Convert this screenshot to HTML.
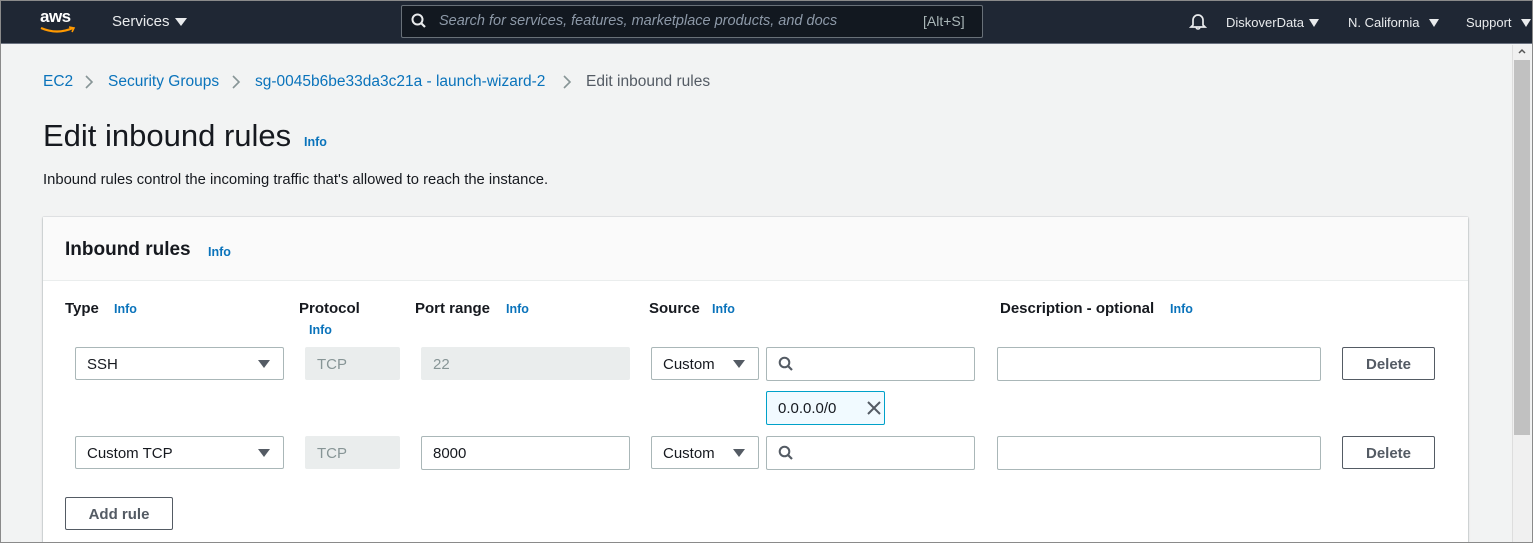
<!DOCTYPE html>
<html><head><meta charset="utf-8"><style>
*{box-sizing:border-box;margin:0;padding:0}
html{width:1533px;height:543px;overflow:hidden}
body{width:1533px;height:543px;overflow:hidden;font-family:"Liberation Sans",sans-serif;background:#f2f3f3;position:relative;color:#16191f}
.a{position:absolute;white-space:nowrap}
#frame{position:absolute;left:0;top:0;width:1533px;height:543px;border:1px solid #8a8a8a;pointer-events:none;z-index:10}
.nav{position:absolute;left:0;top:0;width:1533px;height:44px;background:#1f2734;border-bottom:1px solid #6b7280}
.nt{color:#e9ebed;font-size:14px}
.link{color:#0a73bb;font-size:15.5px}
.info{color:#0a73bb;font-size:12.5px;font-weight:bold}
.lbl{font-size:15px;font-weight:bold;color:#16191f}
.box{position:absolute;border:1px solid #aab7b8;border-radius:2px;background:#fff;font-size:15px;padding-left:11px;display:flex;align-items:center;padding-top:1px}
.dis{background:#eaeded;border-color:#eaeded;color:#879596}
.tri{position:absolute;width:0;height:0;border-left:6px solid transparent;border-right:6px solid transparent;border-top:8px solid #545b64}
.btn{position:absolute;border:1px solid #545b64;border-radius:2px;background:#fff;font-weight:bold;font-size:15px;color:#545b64;display:flex;align-items:center;justify-content:center;padding-top:1px}
.chev{position:absolute}
</style></head><body>
<div class="nav"></div>
<div class="a" style="left:40px;top:7px;color:#fff;font-size:17px;font-weight:bold;letter-spacing:-0.5px">aws</div>
<svg class="a" style="left:39px;top:25px" width="38" height="10"><path d="M2 3 Q18 10 34 3" stroke="#f90" stroke-width="2.2" fill="none"/><path d="M30 2 L35 3 L33 7" stroke="#f90" stroke-width="1.6" fill="none"/></svg>
<div class="a nt" style="left:112px;top:13px;font-size:15px">Services</div>
<div class="tri" style="left:175px;top:18px;border-top-color:#e9ebed"></div>
<div class="a" style="left:401px;top:5px;width:582px;height:33px;border:1px solid #687078;border-radius:2px;background:#121820"></div>
<svg class="a" style="left:411px;top:13px" width="16" height="16"><circle cx="6.5" cy="6.5" r="5" stroke="#e9ebed" stroke-width="2" fill="none"/><path d="M10 10 L14 14" stroke="#e9ebed" stroke-width="2.2"/></svg>
<div class="a" style="left:439px;top:13px;color:#8d99a8;font-size:14.5px;font-style:italic">Search for services, features, marketplace products, and docs</div>
<div class="a" style="left:923px;top:13px;color:#aab7b8;font-size:14px">[Alt+S]</div>
<svg class="a" style="left:1189px;top:12px" width="18" height="18"><path d="M4 13 L4 8 A5 5 0 0 1 14 8 L14 13 L16 15 L2 15 Z" stroke="#e9ebed" stroke-width="1.7" fill="none"/><path d="M7 15 A2 2 0 0 0 11 15" stroke="#e9ebed" stroke-width="1.5" fill="none"/></svg>
<div class="a nt" style="left:1226px;top:15px;font-size:13px">DiskoverData</div>
<div class="tri" style="left:1309px;top:19px;border-top-color:#e9ebed;border-left-width:5px;border-right-width:5px"></div>
<div class="a nt" style="left:1348px;top:15px;font-size:13px">N. California</div>
<div class="tri" style="left:1429px;top:19px;border-top-color:#e9ebed;border-left-width:5px;border-right-width:5px"></div>
<div class="a nt" style="left:1466px;top:15px;font-size:13px">Support</div>
<div class="tri" style="left:1521px;top:19px;border-top-color:#e9ebed;border-left-width:5px;border-right-width:5px"></div>

<div class="a" style="left:1512px;top:45px;width:19px;height:498px;background:#f0f0f0;border-left:1px solid #ddd"></div>
<div class="a" style="left:1514px;top:60px;width:16px;height:375px;background:#c1c1c1"></div>
<svg class="a" style="left:1517px;top:47px" width="10" height="8"><path d="M2 6 L5 3 L8 6" stroke="#555" stroke-width="1.5" fill="none"/></svg>

<div class="a link" style="left:43px;top:73px">EC2</div>
<svg class="chev" style="left:84px;top:74px" width="10" height="16"><path d="M2 2 L8 8 L2 14" stroke="#879596" stroke-width="1.6" fill="none"/></svg>
<div class="a link" style="left:108px;top:73px">Security Groups</div>
<svg class="chev" style="left:231px;top:74px" width="10" height="16"><path d="M2 2 L8 8 L2 14" stroke="#879596" stroke-width="1.6" fill="none"/></svg>
<div class="a link" style="left:255px;top:73px">sg-0045b6be33da3c21a - launch-wizard-2</div>
<svg class="chev" style="left:562px;top:74px" width="10" height="16"><path d="M2 2 L8 8 L2 14" stroke="#879596" stroke-width="1.6" fill="none"/></svg>
<div class="a" style="left:586px;top:73px;font-size:15.5px;color:#545b64">Edit inbound rules</div>

<div class="a" style="left:43px;top:118px;font-size:31px;color:#16191f">Edit inbound rules</div>
<div class="a info" style="left:304px;top:135px">Info</div>
<div class="a" style="left:43px;top:172px;font-size:14.8px;color:#16191f">Inbound rules control the incoming traffic that's allowed to reach the instance.</div>

<div class="a" style="left:43px;top:217px;width:1425px;height:330px;background:#fff;box-shadow:0 1px 2px rgba(0,28,36,.3),0 0 1px rgba(0,28,36,.3)"></div>
<div class="a" style="left:43px;top:217px;width:1425px;height:64px;background:#fafafa;border-bottom:1px solid #eaeded"></div>
<div class="a" style="left:65px;top:239px;font-size:19px;font-weight:bold">Inbound rules</div>
<div class="a info" style="left:208px;top:245px">Info</div>

<div class="a lbl" style="left:65px;top:300px">Type</div><div class="a info" style="left:114px;top:302px">Info</div>
<div class="a lbl" style="left:299px;top:300px">Protocol</div><div class="a info" style="left:309px;top:323px">Info</div>
<div class="a lbl" style="left:415px;top:300px">Port range</div><div class="a info" style="left:506px;top:302px">Info</div>
<div class="a lbl" style="left:649px;top:300px">Source</div><div class="a info" style="left:712px;top:302px">Info</div>
<div class="a lbl" style="left:1000px;top:300px">Description - optional</div><div class="a info" style="left:1170px;top:302px">Info</div>

<div class="box" style="left:75px;top:347px;width:209px;height:33px">SSH</div><div class="tri" style="left:258px;top:360px"></div>
<div class="box dis" style="left:305px;top:347px;width:95px;height:33px">TCP</div>
<div class="box dis" style="left:421px;top:347px;width:209px;height:33px">22</div>
<div class="box" style="left:651px;top:347px;width:108px;height:33px">Custom</div><div class="tri" style="left:733px;top:360px"></div>
<div class="box" style="left:766px;top:347px;width:209px;height:34px"></div>
<svg class="a" style="left:778px;top:356px" width="16" height="16"><circle cx="6.5" cy="6.5" r="4.8" stroke="#545b64" stroke-width="2" fill="none"/><path d="M10 10 L14 14" stroke="#545b64" stroke-width="2.2"/></svg>
<div class="box" style="left:997px;top:347px;width:324px;height:34px"></div>
<div class="btn" style="left:1342px;top:347px;width:93px;height:33px">Delete</div>

<div class="box" style="left:766px;top:391px;width:119px;height:34px;background:#f1faff;border-color:#00a1c9">0.0.0.0/0</div>
<svg class="a" style="left:866px;top:400px" width="16" height="16"><path d="M2 2 L14 14 M14 2 L2 14" stroke="#545b64" stroke-width="2"/></svg>

<div class="box" style="left:75px;top:436px;width:209px;height:33px">Custom TCP</div><div class="tri" style="left:258px;top:449px"></div>
<div class="box dis" style="left:305px;top:436px;width:95px;height:33px">TCP</div>
<div class="box" style="left:421px;top:436px;width:209px;height:34px">8000</div>
<div class="box" style="left:651px;top:436px;width:108px;height:33px">Custom</div><div class="tri" style="left:733px;top:449px"></div>
<div class="box" style="left:766px;top:436px;width:209px;height:34px"></div>
<svg class="a" style="left:778px;top:445px" width="16" height="16"><circle cx="6.5" cy="6.5" r="4.8" stroke="#545b64" stroke-width="2" fill="none"/><path d="M10 10 L14 14" stroke="#545b64" stroke-width="2.2"/></svg>
<div class="box" style="left:997px;top:436px;width:324px;height:34px"></div>
<div class="btn" style="left:1342px;top:436px;width:93px;height:33px">Delete</div>

<div class="btn" style="left:65px;top:497px;width:108px;height:33px;color:#545b64">Add rule</div>
<div id="frame"></div>
</body></html>
